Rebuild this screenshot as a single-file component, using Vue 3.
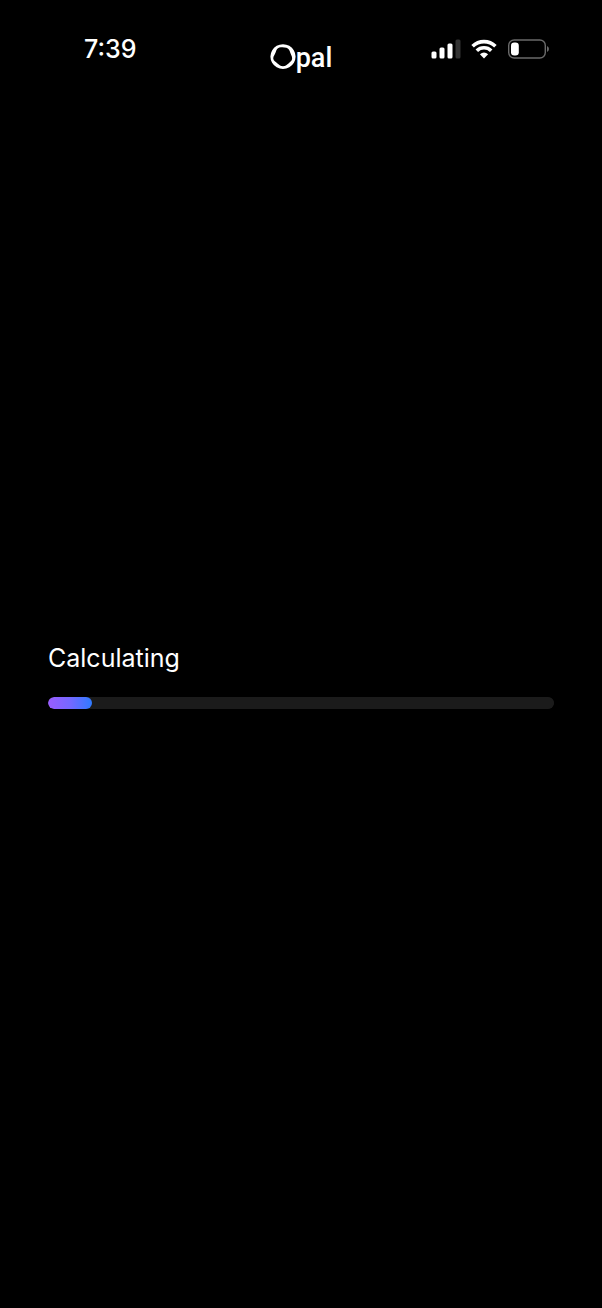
<script setup>
import { ref } from 'vue'

const progress = ref(87)
const bars = [
  { x: 0, h: 7, on: true },
  { x: 8, h: 11, on: true },
  { x: 16, h: 15, on: true },
  { x: 24, h: 19, on: false },
]
</script>

<template>
  <div class="screen">
    <header class="top">
      <time class="clock">7:39</time>
      <div class="brand">
        <svg class="ring" width="26" height="26" viewBox="0 0 26 26" aria-hidden="true">
          <path
            fill="#fff"
            fill-rule="evenodd"
            d="M13 0.2A12.6 12.4 0 1 1 12.99 0.2ZM9.4 3.6C7.2 4.2 6.4 6 5.6 8.6C4.8 11 3 12.6 3.3 14.8C3.6 17 5.6 17.9 7.5 19.4C9.4 20.9 10.6 22.2 13 22.2C15.4 22.2 16.6 20.9 18.5 19.4C20.3 18 21.9 17 22.1 14.8C22.3 12.7 21 11 20.2 8.6C19.4 6 18.6 4.4 16.4 3.8C14.2 3.2 11.6 3.1 9.4 3.6Z"
          />
        </svg>
        <span class="name" aria-label="Opal">pal</span>
      </div>
      <div class="status">
        <svg width="30" height="20" viewBox="0 0 30 20" role="img" aria-label="Signal">
          <rect
            v-for="b in bars"
            :key="b.x"
            :x="b.x + 0.5"
            :y="19.5 - b.h"
            width="5"
            :height="b.h"
            rx="1.5"
            :fill="b.on ? '#fff' : '#333'"
          />
        </svg>
        <svg width="26" height="20" viewBox="0 0 26 20" role="img" aria-label="Wi-Fi">
          <g fill="none" stroke="#fff" stroke-width="3.6">
            <path d="M1.6 7.3A16.3 16.3 0 0 1 24.4 7.3" />
            <path d="M5.8 11.7A10.3 10.3 0 0 1 20.2 11.7" />
          </g>
          <path fill="#fff" d="M13 19.5L8.9 15.3Q13 11.9 17.1 15.3Z" />
        </svg>
        <svg width="42" height="20" viewBox="0 0 42 20" role="img" aria-label="Battery">
          <rect x="1.7" y="1" width="36.6" height="18" rx="5.5" fill="none" stroke="#6a6a6a" stroke-width="1.4" />
          <path fill="#6a6a6a" d="M40 7Q42 7.8 42 10T40 13Z" />
          <rect x="4" y="3.4" width="7.8" height="13.2" rx="3.3" fill="#fff" />
        </svg>
      </div>
    </header>
    <main class="content">
      <label class="label" for="calc">Calculating</label>
      <progress id="calc" class="bar" :value="progress" max="1000"></progress>
    </main>
  </div>
</template>

<style>
body {
  background: #000;
}
</style>

<style scoped>
.screen {
  min-height: 100vh;
  display: flex;
  flex-direction: column;
  background: #000;
  color: #fff;
  font-family: Inter, "Liberation Sans", sans-serif;
}
.top {
  display: grid;
  grid-template-columns: 1fr auto 1fr;
  align-items: start;
  height: 60px;
  padding-top: 36px;
}
.clock {
  padding-left: 84px;
  font-size: 25px;
  line-height: 26px;
  font-weight: 500;
}
.brand {
  display: flex;
  align-items: flex-start;
  padding-top: 8px;
}
.name {
  font-family: Roboto, "Liberation Sans", sans-serif;
  font-size: 27px;
  line-height: 28px;
  font-weight: 500;
}
.status {
  display: flex;
  justify-content: flex-end;
  align-items: center;
  gap: 10px;
  padding: 3px 53px 0 0;
}
.content {
  flex: 1;
  display: flex;
  flex-direction: column;
  justify-content: center;
  gap: 23px;
  padding: 0 48px 53px;
}
.label {
  font-size: 25px;
  line-height: 32px;
}
.bar {
  appearance: none;
  display: block;
  width: 100%;
  height: 12px;
  border: 0;
  border-radius: 6px;
  overflow: hidden;
  background: #1b1b1b;
}
.bar::-webkit-progress-bar {
  background: #1b1b1b;
  border-radius: 6px;
}
.bar::-webkit-progress-value {
  border-radius: 6px;
  background: linear-gradient(90deg, #9a5cff, #7568ff 50%, #2f7bff);
}
</style>
